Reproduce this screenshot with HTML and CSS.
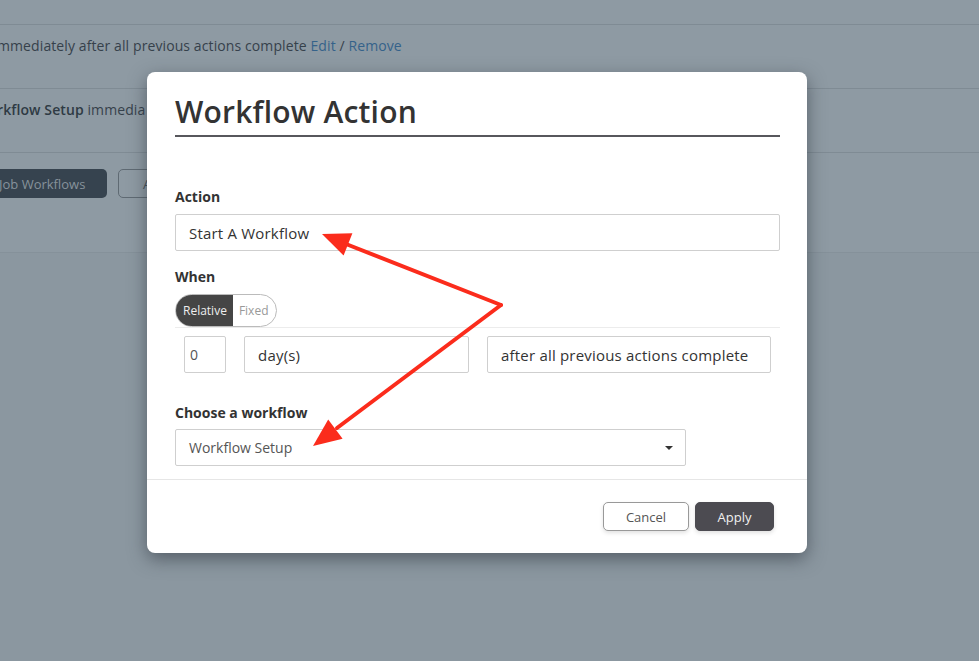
FILE: index.html
```html
<!DOCTYPE html>
<html>
<head>
<meta charset="utf-8">
<link rel="stylesheet" href="styles.css">
</head>
<body>
<div class="bg">
  <div class="card">
    <div class="row r1"></div>
    <div class="row r2"><span class="cut">mmediately after all previous actions complete <a class="lnk">Edit</a> / <a class="lnk">Remove</a></span></div>
    <div class="row r3"><div class="clip"><span class="cut"><b>rkflow Setup</b> immedia</span></div></div>
    <div class="bg-actions"><span class="bg-btn dark">Job Workflows</span><span class="bg-btn outline">A</span></div>
  </div>
</div>

<div class="modal">
  <div class="modal-body">
    <h1 class="title">Workflow Action</h1>
    <div class="field f-action">
      <div class="label">Action</div>
      <div class="input wide">Start A Workflow</div>
    </div>
    <div class="field f-when">
      <div class="label">When</div>
      <div class="toggle"><span class="tg on">Relative</span><span class="tg">Fixed</span></div>
      <div class="when-row">
        <div class="input num">0</div>
        <div class="input unit">day(s)</div>
        <div class="input after">after all previous actions complete</div>
      </div>
    </div>
    <div class="field f-choose">
      <div class="label">Choose a workflow</div>
      <div class="select"><span>Workflow Setup</span><span class="caret"></span></div>
    </div>
  </div>
  <div class="modal-footer">
    <button class="btn cancel">Cancel</button>
    <button class="btn apply">Apply</button>
  </div>
</div>

<svg class="arrows" width="979" height="661" viewBox="0 0 979 661">
  <g stroke="#fb2c1c" stroke-width="4" stroke-linecap="round" fill="none">
    <line x1="501" y1="305" x2="346" y2="244"/>
    <line x1="501" y1="305" x2="337" y2="428"/>
  </g>
  <g fill="#fb2c1c">
    <polygon points="322,234 352.4,233.2 343.6,255.4"/>
    <polygon points="313,446 342.6,438.8 328.2,419.6"/>
  </g>
</svg>
</body>
</html>
```
FILE: styles.css
```css
* { box-sizing: border-box; }
html, body { margin: 0; padding: 0; }
body {
  width: 979px;
  height: 661px;
  overflow: hidden;
  background: #8b97a0;
  font-family: "Open Sans", Lato, sans-serif;
  position: relative;
}
.bg { width: 979px; }
.card {
  background: #8e9aa3;
  height: 253px;
  border-bottom: 1px solid #85919a;
}
.row { border-bottom: 1px solid #7f8b94; }
.r1 { height: 25px; }
.r2, .r3 {
  height: 64px;
  padding-top: 11px;
  font-size: 14px;
  color: #36414b;
  white-space: nowrap;
  overflow: hidden;
  letter-spacing: 0.1px;
}
.clip { width: 147px; overflow: hidden; }
.cut { display: inline-block; margin-left: -3px; }
.lnk { color: #35628a; }
.r3 b { color: #2f3a44; font-weight: 600; }
.bg-actions {
  padding: 16px 0 0 0;
  display: flex;
  gap: 11px;
  margin-left: -12px;
  width: 159px;
  overflow: hidden;
}
.bg-btn {
  flex: none;
  display: inline-flex;
  align-items: center;
  height: 29px;
  border-radius: 5px;
  font-size: 13px;
  white-space: nowrap;
}
.bg-btn.dark { background: #36434f; color: #86929b; width: 119px; padding-left: 11px; }
.bg-btn.outline { border: 1px solid #5f6a73; color: #44505a; width: 120px; padding-left: 24px; }

.modal {
  position: absolute;
  left: 147px;
  top: 72px;
  width: 660px;
  height: 481px;
  background: #fff;
  border-radius: 8px;
  box-shadow: 0 6px 18px rgba(40, 48, 56, 0.55);
  display: flex;
  flex-direction: column;
}
.modal-body { padding: 19px 27px 0 28px; flex: 0 0 408px; border-bottom: 1px solid #e6e6e6; }
.title {
  margin: 0;
  font-size: 30px;
  font-weight: 600;
  color: #333;
  line-height: 41px;
  padding-bottom: 3px;
  border-bottom: 2px solid #57575c;
  letter-spacing: 0.2px;
}
.label {
  font-size: 14px;
  font-weight: 700;
  color: #333;
  line-height: 18px;
  margin-bottom: 9px;
}
.f-action { margin-top: 51px; }
.f-action .label { margin-bottom: 8px; }
.input {
  border: 1px solid #cfcfcf;
  border-radius: 2px;
  height: 37px;
  font-size: 15px;
  color: #333;
  display: flex;
  align-items: center;
  padding-left: 13px;
  letter-spacing: 0.2px;
}
.wide { width: 605px; }
.f-when { margin-top: 17px; }
.toggle {
  display: inline-flex;
  height: 33px;
  border: 1px solid #bbb;
  border-radius: 17px;
  overflow: hidden;
  margin-top: -1px;
}
.tg {
  display: flex;
  align-items: center;
  font-size: 12px;
  color: #999;
  padding: 0 8px 0 6px;
}
.tg.on { background: #454545; color: #eee; padding: 0 6px 0 7px; }
.when-row {
  border-top: 1px solid #ececec;
  width: 605px;
  display: flex;
  padding: 8px 0 0 9px;
}
.num { width: 42px; padding-left: 5px; font-size: 14px; color: #555; }
.unit { width: 225px; margin-left: 18px; }
.after { width: 284px; margin-left: 18px; }
.f-choose { margin-top: 31px; }
.f-choose .label { margin-bottom: 7px; }
.select {
  width: 511px;
  height: 37px;
  border: 1px solid #cfcfcf;
  border-radius: 2px;
  display: flex;
  align-items: center;
  justify-content: space-between;
  padding: 0 12px 0 13px;
  font-size: 14px;
  color: #555;
}
.caret {
  width: 0; height: 0;
  border-left: 4px solid transparent;
  border-right: 4px solid transparent;
  border-top: 4px solid #333;
}
.modal-footer {
  display: flex;
  justify-content: flex-end;
  gap: 6px;
  padding: 22px 33px 0 0;
}
.btn {
  height: 29px;
  border-radius: 5px;
  font-family: "Open Sans", Lato, sans-serif;
  font-size: 13px;
  box-shadow: 0 2px 4px rgba(0,0,0,0.12);
}
.cancel { width: 86px; background: #fff; border: 1px solid #999; color: #555; }
.apply { width: 79px; background: #4c4b51; border: 1px solid #4c4b51; color: #f0f0f0; }
.arrows { position: absolute; left: 0; top: 0; pointer-events: none; }
```
